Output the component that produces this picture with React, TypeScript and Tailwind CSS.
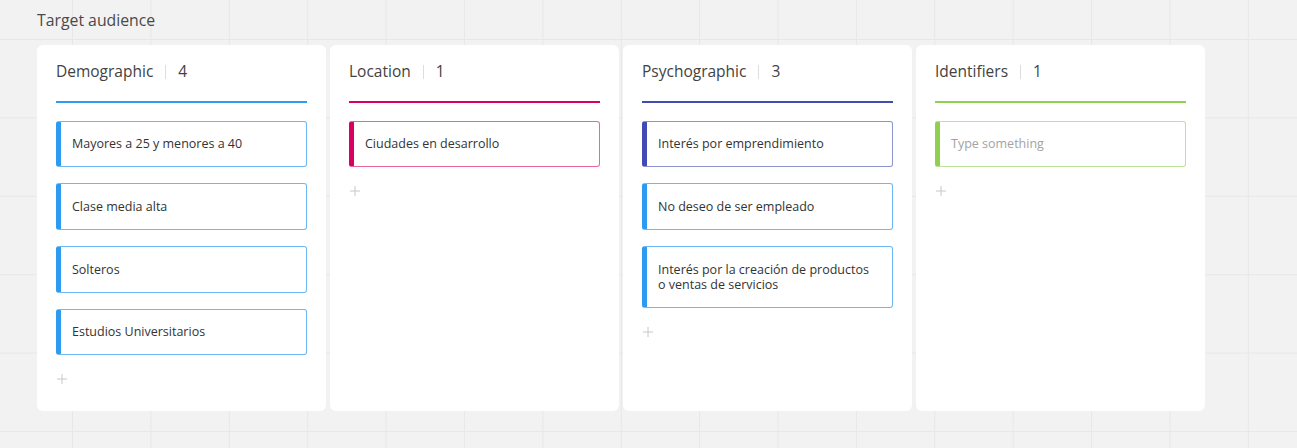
import React from 'react';

type Column = {
  title: string;
  color: string;
  items: { text: string; placeholder?: boolean; accent?: string }[];
};

const columns: Column[] = [
  {
    title: 'Demographic',
    color: 'blue',
    items: [
      { text: 'Mayores a 25 y menores a 40' },
      { text: 'Clase media alta' },
      { text: 'Solteros' },
      { text: 'Estudios Universitarios' },
    ],
  },
  {
    title: 'Location',
    color: 'pink',
    items: [{ text: 'Ciudades en desarrollo' }],
  },
  {
    title: 'Psychographic',
    color: 'indigo',
    items: [
      { text: 'Interés por emprendimiento' },
      { text: 'No deseo de ser empleado', accent: 'blue' },
      { text: 'Interés por la creación de productos o ventas de servicios', accent: 'blue' },
    ],
  },
  {
    title: 'Identifiers',
    color: 'green',
    items: [{ text: 'Type something', placeholder: true }],
  },
];

// full class names per colour so tailwind picks them up
const lineClass: Record<string, string> = {
  blue: 'bg-[#2d9bf0]',
  pink: 'bg-[#da0063]',
  indigo: 'bg-[#414bb2]',
  green: 'bg-[#8fd14f]',
};

const itemClass: Record<string, string> = {
  blue: 'border-[#2d9bf0]/70 border-l-[#2d9bf0]',
  pink: 'border-[#da0063]/60 border-l-[#da0063]',
  indigo: 'border-[#414bb2]/60 border-l-[#414bb2]',
  green: 'border-[#8fd14f]/60 border-l-[#8fd14f]',
};

const Plus = () => (
  <svg width="10" height="10" viewBox="0 0 10 10" className="text-[#c8c8c8]">
    <path d="M5 0v10M0 5h10" stroke="currentColor" strokeWidth="1" />
  </svg>
);

const App: React.FC = () => {
  return (
    <div
      className="w-full h-[448px] bg-[#f2f2f2] bg-[linear-gradient(to_right,#e7e7e7_1px,transparent_1px),linear-gradient(to_bottom,#e7e7e7_1px,transparent_1px)] bg-[length:78.4px_78.4px] bg-[position:72px_39px] pl-[37px] pt-[8px] font-['Open_Sans',sans-serif]"
    >
      <div className="h-[24px] leading-[24px] text-[15.8px] text-[#4a4a4a]">Target audience</div>

      <div className="flex gap-[4px] mt-[12.5px]">
        {columns.map((col) => (
          <div key={col.title} className="w-[289px] h-[366px] bg-white rounded-[6px] pt-[15.5px] pl-[19px] pr-[19px]">
            <div className="flex items-center h-[24px] text-[15.5px] text-[#424242]">
              <span>{col.title}</span>
              <span className="w-px h-[14px] bg-[#dedede] mx-[12px]" />
              <span>{col.items.length}</span>
            </div>
            <div className={`h-[2px] mt-[16.5px] ${lineClass[col.color]}`} />

            <div className="flex flex-col gap-[16px] mt-[18px]">
              {col.items.map((it) => (
                <div
                  key={it.text}
                  className={`border border-l-[5px] rounded-[3px] pl-[11px] pr-[20px] py-[14.7px] text-[12.5px] leading-[15.3px] ${
                    itemClass[it.accent ?? col.color]
                  } ${it.placeholder ? 'text-[#a3a3a3]' : 'text-[#333333]'}`}
                >
                  {it.text}
                </div>
              ))}
            </div>

            <div className="mt-[19px] pl-[1px]">
              <Plus />
            </div>
          </div>
        ))}
      </div>
    </div>
  );
};

export default App;
